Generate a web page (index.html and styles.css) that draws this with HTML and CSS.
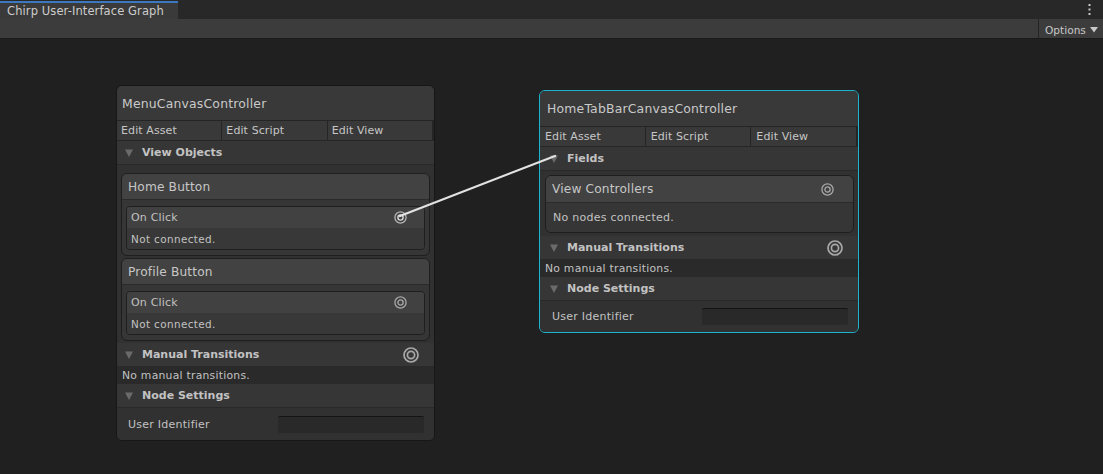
FILE: index.html
```html
<!DOCTYPE html>
<html>
<head>
<meta charset="utf-8">
<title>Chirp User-Interface Graph</title>
<link rel="stylesheet" href="styles.css">
</head>
<body>
<div class="tabbar">
  <div class="tab">Chirp User-Interface Graph</div>
  <div class="kebab">
    <svg width="3" height="11" viewBox="0 0 3 11"><rect x="0.5" y="0" width="2" height="2" fill="#c8c8c8"/><rect x="0.5" y="4.5" width="2" height="2" fill="#c8c8c8"/><rect x="0.5" y="9" width="2" height="2" fill="#c8c8c8"/></svg>
  </div>
</div>
<div class="toolbar">
  <div class="options">Options <svg width="8" height="6" viewBox="0 0 8 6"><polygon points="0,0 8,0 4,5.5" fill="#c8c8c8"/></svg></div>
</div>
<div class="canvas">
  <div class="node node-menu">
    <div class="title">MenuCanvasController</div>
    <div class="actions"><div class="btn">Edit Asset</div><div class="btn">Edit Script</div><div class="btn">Edit View</div></div>
    <div class="sec-head"><svg class="tri" width="8" height="8" viewBox="0 0 8 8"><polygon points="0,0.5 8,0.5 4,8" fill="#6a6a6a"/></svg>View Objects</div>
    <div class="sec-body">
      <div class="card">
        <div class="card-head">Home Button</div>
        <div class="card-body">
          <div class="portbox">
            <div class="prow"><span>On Click</span><svg class="port" width="13" height="13" viewBox="0 0 13 13"><circle cx="6.5" cy="6.5" r="5.6" fill="none" stroke="#b4b4b4" stroke-width="1.3"/><circle cx="6.5" cy="6.5" r="2.6" fill="none" stroke="#d8d8d8" stroke-width="1.4"/></svg></div>
            <div class="prow msg">Not connected.</div>
          </div>
        </div>
      </div>
      <div class="card">
        <div class="card-head">Profile Button</div>
        <div class="card-body">
          <div class="portbox">
            <div class="prow"><span>On Click</span><svg class="port" width="13" height="13" viewBox="0 0 13 13"><circle cx="6.5" cy="6.5" r="5.6" fill="none" stroke="#a8a8a8" stroke-width="1.3"/><circle cx="6.5" cy="6.5" r="2.6" fill="none" stroke="#a8a8a8" stroke-width="1.3"/></svg></div>
            <div class="prow msg">Not connected.</div>
          </div>
        </div>
      </div>
    </div>
    <div class="sec-head"><svg class="tri" width="8" height="8" viewBox="0 0 8 8"><polygon points="0,0.5 8,0.5 4,8" fill="#6a6a6a"/></svg>Manual Transitions<svg class="port-lg" width="16" height="16" viewBox="0 0 16 16"><circle cx="8" cy="8" r="7" fill="none" stroke="#a8a8a8" stroke-width="1.7"/><circle cx="8" cy="8" r="3.6" fill="none" stroke="#a8a8a8" stroke-width="1.7"/></svg></div>
    <div class="note">No manual transitions.</div>
    <div class="sec-head"><svg class="tri" width="8" height="8" viewBox="0 0 8 8"><polygon points="0,0.5 8,0.5 4,8" fill="#6a6a6a"/></svg>Node Settings</div>
    <div class="setting"><span>User Identifier</span><div class="input"></div></div>
  </div>

  <div class="node node-home">
    <div class="title">HomeTabBarCanvasController</div>
    <div class="actions"><div class="btn">Edit Asset</div><div class="btn">Edit Script</div><div class="btn">Edit View</div></div>
    <div class="sec-head"><svg class="tri" width="8" height="8" viewBox="0 0 8 8"><polygon points="0,0.5 8,0.5 4,8" fill="#6a6a6a"/></svg>Fields</div>
    <div class="sec-body">
      <div class="card card-vc">
        <div class="card-head"><span>View Controllers</span><svg class="port" width="13" height="13" viewBox="0 0 13 13"><circle cx="6.5" cy="6.5" r="5.6" fill="none" stroke="#a8a8a8" stroke-width="1.3"/><circle cx="6.5" cy="6.5" r="2.6" fill="none" stroke="#a8a8a8" stroke-width="1.3"/></svg></div>
        <div class="card-msg">No nodes connected.</div>
      </div>
    </div>
    <div class="sec-head"><svg class="tri" width="8" height="8" viewBox="0 0 8 8"><polygon points="0,0.5 8,0.5 4,8" fill="#6a6a6a"/></svg>Manual Transitions<svg class="port-lg" width="16" height="16" viewBox="0 0 16 16"><circle cx="8" cy="8" r="7" fill="none" stroke="#a8a8a8" stroke-width="1.7"/><circle cx="8" cy="8" r="3.6" fill="none" stroke="#a8a8a8" stroke-width="1.7"/></svg></div>
    <div class="note">No manual transitions.</div>
    <div class="sec-head"><svg class="tri" width="8" height="8" viewBox="0 0 8 8"><polygon points="0,0.5 8,0.5 4,8" fill="#6a6a6a"/></svg>Node Settings</div>
    <div class="setting"><span>User Identifier</span><div class="input"></div></div>
  </div>

  <svg class="edges" width="1103" height="435" viewBox="0 0 1103 435">
    <line x1="400" y1="177" x2="555" y2="117" stroke="#e2e2e2" stroke-width="2.2" stroke-linecap="round"/>
  </svg>
</div>
</body>
</html>
```

FILE: styles.css
```css
* { box-sizing: border-box; }
html, body { margin: 0; padding: 0; }
body {
  width: 1103px;
  height: 474px;
  overflow: hidden;
  background: #202020;
  font-family: "DejaVu Sans", Verdana, sans-serif;
  color: #c4c4c4;
}

.tabbar {
  height: 19px;
  background: #282828;
  display: flex;
  justify-content: space-between;
}
.tab {
  width: 178px;
  height: 18px;
  margin-top: 1px;
  border-top: 2px solid #3b78bd;
  background: #3a3a3a;
  font-size: 11.5px;
  line-height: 17px;
  padding-left: 7px;
  letter-spacing: 0.1px;
  color: #cccccc;
  white-space: nowrap;
  overflow: hidden;
}
.kebab {
  width: 24px;
  display: flex;
  align-items: center;
  justify-content: center;
  padding-right: 3px;
}

.toolbar {
  height: 20px;
  background: #3c3c3c;
  border-bottom: 1px solid #1b1b1b;
  display: flex;
  justify-content: flex-end;
}
.options {
  width: 65px;
  border-left: 1px solid #242424;
  font-size: 10.6px;
  display: flex;
  align-items: center;
  gap: 4px;
  padding: 2px 0 0 6px;
  color: #c8c8c8;
}

.canvas {
  position: relative;
  height: 435px;
}
.edges {
  position: absolute;
  left: 0;
  top: 0;
  pointer-events: none;
}

.node {
  position: absolute;
  width: 319px;
  border: 1px solid #171717;
  border-radius: 6px;
  background: #313131;
  overflow: hidden;
}
.node-menu { left: 116px; top: 46px; }
.node-home {
  left: 539px;
  top: 51px;
  width: 320px;
  border-color: #1cb3d1;
}

.title {
  height: 35px;
  background: #393939;
  border-bottom: 1px solid #252525;
  padding-left: 5px;
  font-size: 12.4px;
  letter-spacing: 0.2px;
  display: flex;
  align-items: center;
  color: #c9c9c9;
}
.node-home .title { height: 36px; padding-left: 7px; }

.actions {
  display: flex;
  height: 20px;
  gap: 1px;
  padding-right: 2px;
  background: #252525;
  border-bottom: 1px solid #262626;
}
.btn {
  flex: 1;
  background: #393939;
  font-size: 11px;
  line-height: 19px;
  padding-left: 4px;
  letter-spacing: 0.1px;
  color: #c6c6c6;
  white-space: nowrap;
}
.node-home .btn { padding-left: 5px; }

.sec-head {
  height: 24px;
  background: #363636;
  border-bottom: 1px solid #292929;
  display: flex;
  align-items: center;
  padding: 0 15px 0 8px;
  font-weight: bold;
  font-size: 11px;
  color: #c2c2c2;
}
.node-home .sec-head { padding-left: 10px; }
.tri { margin-right: 9px; flex: none; }
.port-lg { margin-left: auto; flex: none; }

.sec-body { padding: 8px 4px 2px 4px; }
.node-home .sec-body { padding: 4px 4px 3px 5px; }

.card {
  height: 83px;
  border: 1px solid #1e1e1e;
  border-radius: 6px;
  background: #363636;
  overflow: hidden;
}
.card + .card { margin-top: 2px; }
.card-head {
  height: 26px;
  background: #424242;
  border-bottom: 1px solid #2b2b2b;
  padding: 0 19px 0 6px;
  font-size: 12.2px;
  letter-spacing: 0.15px;
  display: flex;
  align-items: center;
  justify-content: space-between;
  color: #c6c6c6;
}
.card-body { padding: 6px 4px 0 4px; }
.portbox {
  border: 1px solid #1f1f1f;
  border-radius: 4px;
  overflow: hidden;
}
.prow {
  height: 21px;
  display: flex;
  align-items: center;
  justify-content: space-between;
  padding: 0 17px 0 4px;
  font-size: 11px;
  letter-spacing: 0.2px;
  background: #414141;
  color: #c2c2c2;
}
.prow.msg {
  background: #383838;
  font-size: 10.4px;
  letter-spacing: 0.4px;
}

.card-vc { height: 58px; display: flex; flex-direction: column; }
.card-vc .card-head { height: 27px; flex: none; }
.card-msg {
  flex: 1;
  display: flex;
  align-items: center;
  padding-left: 7px;
  font-size: 11px;
  letter-spacing: 0.25px;
  background: #363636;
  color: #c2c2c2;
}

.note {
  height: 17px;
  background: #2a2a2a;
  font-size: 10.8px;
  letter-spacing: 0.25px;
  padding-left: 5px;
  display: flex;
  align-items: center;
  color: #c2c2c2;
}
.setting {
  height: 32px;
  display: flex;
  align-items: center;
  justify-content: space-between;
  padding: 0 10px 0 11px;
  font-size: 11px;
  letter-spacing: 0.25px;
  background: #313131;
  color: #c2c2c2;
}
.node-home .setting { height: 31px; padding-left: 12px; }
.input {
  width: 146px;
  height: 17px;
  background: #292929;
  border-top: 1px solid #141414;
  border-radius: 2px;
}
```
